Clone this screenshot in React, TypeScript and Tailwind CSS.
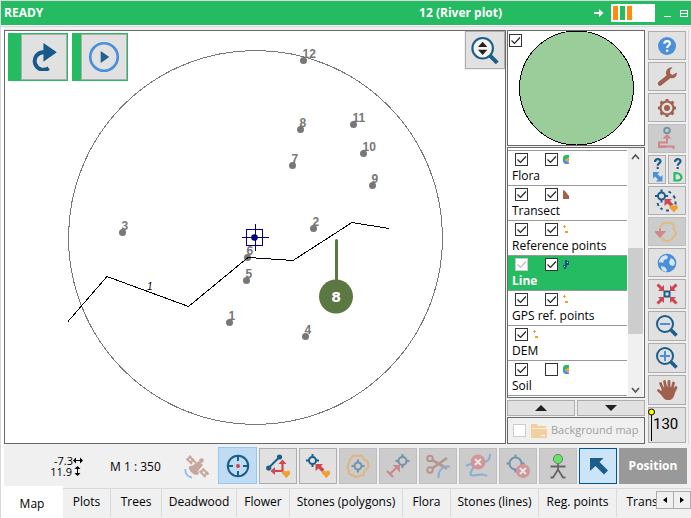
import type { ReactNode } from "react";

const NAVY = "#1b5e8c";
const BLUE = "#4a90d9";
const RED = "#cf4550";
const BROWN = "#a0604e";
const ORANGE = "#f0a030";

/* ---------- Icons ---------- */

const Icon = ({ children, className = "size-6" }: { children: ReactNode; className?: string }) => (
  <svg viewBox="0 0 24 24" className={className} fill="none" aria-hidden="true">
    {children}
  </svg>
);

// Small survey target: ring with four ticks
const Target = ({ x, y, r = 4, color = NAVY }: { x: number; y: number; r?: number; color?: string }) => (
  <g stroke={color} strokeWidth="2">
    <circle cx={x} cy={y} r={r} />
    <path d={`M${x} ${y - r - 3}v3M${x} ${y + r}v3M${x - r - 3} ${y}h3M${x + r} ${y}h3`} />
  </g>
);

const Crossed = ({ x, y, r }: { x: number; y: number; r: number }) => (
  <g>
    <circle cx={x} cy={y} r={r} fill="#d9626a" />
    <path d={`M${x - 3} ${y - 3}l6 6M${x + 3} ${y - 3}l-6 6`} stroke="#fff" strokeWidth="2" />
  </g>
);

const HelpIcon = () => (
  <Icon>
    <circle cx="12" cy="12" r="9" fill={BLUE} />
    <path d="M9.300 9.800c0-3.600 5.600-3.600 5.600-.4 0 2-2.800 2.200-2.800 4.600" stroke="#fff" strokeWidth="2.200" />
    <path d="M11 15.600h2.300v2.200H11z" fill="#fff" />
  </Icon>
);

const WrenchIcon = () => (
  <Icon>
    <path d="M5 18.500l8.500-6.800" stroke={BROWN} strokeWidth="4.500" strokeLinecap="round" />
    <path d="M17.500 2.200c-4-.3-7.200 2.800-6.400 6.800.7 3.600 4.800 5.400 8.200 3.700 1.900-1.100 2.900-3.200 2.500-5.300l-4.400 2.600-2.300-1.600.1-3.400z" fill={BROWN} />
  </Icon>
);

const GearIcon = () => (
  <Icon>
    <circle cx="12" cy="12" r="6.500" stroke={BROWN} strokeWidth="2.200" />
    <circle cx="12" cy="12" r="3" fill={BROWN} />
    <path
      d="M12 3v3M12 18v3M3 12h3M18 12h3M5.600 5.600l2 2M16.400 16.400l2 2M18.400 5.600l-2 2M7.600 16.400l-2 2"
      stroke={BROWN}
      strokeWidth="3"
    />
  </Icon>
);

const LevelIcon = () => (
  <Icon>
    <circle cx="12" cy="3.500" r="2.800" stroke={NAVY} strokeWidth="2" />
    <path d="M12 7l4.500 4.500h-9z" fill={RED} />
    <path d="M12 11v4.500H4v4h14.500V22" stroke={RED} strokeWidth="2" />
    <path d="M3 18.500h8V21H3z" fill={RED} />
  </Icon>
);

const Question = () => (
  <>
    <path d="M5 5c0-3.800 5.500-3.800 5.500-.8 0 2-2.800 2-2.800 4.600" stroke={NAVY} strokeWidth="2.200" />
    <path d="M6.600 10h2.200v2H6.600z" fill={NAVY} />
  </>
);

const HelpArrowIcon = () => (
  <svg viewBox="0 0 15 26" className="h-[26px] w-[15px]" fill="none" aria-hidden="true">
    <Question />
    <path d="M3 15h6.500l-2 2 3 3 2-2v6.500H6l2-2-3-3-2 2z" fill={BLUE} />
  </svg>
);

const HelpShapeIcon = () => (
  <svg viewBox="0 0 15 26" className="h-[26px] w-[15px]" fill="none" aria-hidden="true">
    <Question />
    <path d="M4.500 16v7.500h4c2.400-.5 3.600-2.500 2.600-4.500-.8-1.800-3-3.200-6.600-3z" stroke="#25bb62" strokeWidth="2.200" />
  </svg>
);

const Blob = ({ x, y }: { x: number; y: number }) => (
  <path d={`M${x} ${y + 4}l-3.500-3.500a2 2 0 0 1 2-3.500l1.500.5a2.200 2.200 0 1 1 2.500 3.500z`} fill={ORANGE} />
);

const SnapIcon = () => (
  <Icon>
    <Target x={6.500} y={7} r={3.500} />
    <path d="M9.500 10h7.500l-2 2 3.500 3.500-2.500 2.500-3.500-3.500-3 2.500z" fill={RED} />
    <path d="M13.500 2.500l2.500 1.500M18.500 6.500l1.500 3M20.500 12.500v3M2.500 14l1 3M5.500 19l2 1.500M11 21.500h3" stroke={NAVY} strokeWidth="2" />
    <Blob x={19} y={19.500} />
  </Icon>
);

const ImportShapeIcon = () => (
  <Icon>
    <path
      d="M6 8c-1-4 4-6 7-5 4-1 7 2 5.500 6 3 2 3.500 6 .5 7-2 4-6 6-9 4.500-2-.5-3-2-3-3.500"
      stroke="#f2a93b"
      strokeWidth="2"
    />
    <path d="M5 8.500v4M1 12h8l-4 4.500z" stroke={RED} strokeWidth="2" fill={RED} />
  </Icon>
);

const GlobeIcon = () => (
  <Icon>
    <circle cx="12" cy="12" r="9.300" fill={BLUE} />
    <path d="M8 5l3-1 2 2-1 2-3 1-1 3-2-1-2 1c0-3 1.500-5.500 4-7zM16 7l3 2 1 4-2 2-3-1-1-3zM6 15l4 1 2 3-1 2c-3-.5-5-2.500-5-6z" fill="#d6e4f3" />
  </Icon>
);

const CenterIcon = () => (
  <Icon>
    <rect x="9.500" y="9.500" width="5" height="5" stroke={NAVY} strokeWidth="2" />
    <path d="M2.500 2.500l5 5M21.500 2.500l-5 5M2.500 21.500l5-5M21.500 21.500l-5-5" stroke={RED} strokeWidth="3" />
    <path d="M9 3v6H3zM15 3v6h6zM9 21v-6H3zM15 21v-6h6z" fill={RED} />
  </Icon>
);

const ZoomIcon = ({ plus = false }: { plus?: boolean }) => (
  <Icon>
    <circle cx="10" cy="10" r="8" stroke={NAVY} strokeWidth="2" />
    <path d="M15.500 15.500l6 6" stroke={NAVY} strokeWidth="3.500" />
    <path d={plus ? "M5 10h10M10 5v10" : "M5 10h10"} stroke={BLUE} strokeWidth="2" />
  </Icon>
);

const HandIcon = () => (
  <Icon>
    <path
      d="M8.500 12L5.500 5.500M11 10.500L9.500 3.500M14 10.500V3.500M17 11.500l1.500-6.500M8 16.500L3.500 12.500M18.500 14.500l2.500-5"
      stroke={BROWN}
      strokeWidth="2.800"
      strokeLinecap="round"
    />
    <path d="M7 10.500c3-2 8-2.500 11.500 0 2 3 1.500 7-1 10-2 2-6.500 2-8.500 0-1.500-1.700-2.500-3-3.500-5z" fill={BROWN} />
  </Icon>
);

const RedoIcon = () => (
  <Icon className="size-7">
    <path d="M16 21.500a7.500 7.500 0 1 1-4-13.500h2" stroke="#175a8a" strokeWidth="3.400" />
    <path d="M11.500 0v16l11.500-8z" fill="#175a8a" />
  </Icon>
);

const PlayIcon = () => (
  <Icon className="size-8">
    <circle cx="12" cy="12" r="10.300" stroke={BLUE} strokeWidth="2" />
    <path d="M9.500 7.500v9l6.500-4.500z" fill="#235f93" />
  </Icon>
);

const ScaleIcon = () => (
  <Icon className="size-7">
    <circle cx="10" cy="10.500" r="8.800" stroke={NAVY} strokeWidth="1.800" fill="#f4f4f4" />
    <path d="M16.500 17l6 6" stroke={NAVY} strokeWidth="3.500" />
    <path d="M6 9.500h8L10 5zM6 11.700h8l-4 4.500z" fill="#222" />
  </Icon>
);

const SatelliteIcon = () => (
  <svg viewBox="0 0 26 26" className="size-[26px] opacity-50" fill="none" aria-hidden="true">
    <path d="M5 3l7 7M2.500 5.500L8 11M15.500 18l6 6M18.500 15.500l6 6M3 7l4-4M6 10l4-4M16 20l4-4M20 23l4-4" stroke={BROWN} strokeWidth="2" />
    <path d="M8 13c-2-1-4 1-3 3 2 4 5 6 8 6 2 0 2-3 1-4l5-6-4-4z" fill={BROWN} />
    <circle cx="17.500" cy="7.500" r="2.300" fill={BROWN} />
    <path d="M1.200 16c0 5 3 8 6.800 8.500" stroke={BLUE} strokeWidth="2" />
  </svg>
);

const LocateIcon = () => (
  <Icon>
    <circle cx="12" cy="12" r="10.200" stroke={NAVY} strokeWidth="2" />
    <path d="M12 1v6M12 17v6M1 12h6M17 12h6" stroke={NAVY} strokeWidth="2" />
    <circle cx="12" cy="12" r="2" fill={RED} />
  </Icon>
);

const EditLineIcon = () => (
  <Icon>
    <path d="M2.500 14L13.500 3" stroke={NAVY} strokeWidth="2" />
    <circle cx="13.500" cy="3" r="2.600" fill={NAVY} />
    <circle cx="2.700" cy="14" r="2.600" fill={NAVY} />
    <path d="M8.500 17h8V9" stroke={RED} strokeWidth="2.200" />
    <path d="M16.500 5.500l4 4.500h-8zM4.500 17L9 13v8z" fill={RED} />
    <Blob x={20.500} y={20} />
  </Icon>
);

const EditPointIcon = () => (
  <Icon>
    <Target x={6.500} y={6.500} r={3.500} />
    <path d="M9.500 10H17l-2 2 3.500 3.500L16 18l-3.500-3.500-3 2.500z" fill={RED} />
    <Blob x={20.500} y={20} />
  </Icon>
);

const PolygonTargetIcon = () => (
  <Icon>
    <path d="M7 1.500l9 .5 2 3 4 3 .5 5-4 4-1 4-8 2-6-3-2-7L4 6z" stroke={ORANGE} strokeWidth="2" />
    <Target x={12} y={12} r={3.500} />
  </Icon>
);

const MeasureIcon = () => (
  <Icon>
    <Target x={16.500} y={7} />
    <path d="M4 20l6-6M1 17l6 6" stroke={RED} strokeWidth="2.200" />
    <path d="M6.500 11H14v7.500z" fill={RED} />
  </Icon>
);

const CutIcon = () => (
  <Icon>
    <circle cx="4" cy="4.500" r="2.800" stroke={BROWN} strokeWidth="2" />
    <circle cx="4" cy="16" r="2.800" stroke={BROWN} strokeWidth="2" />
    <path d="M6 6l15 8.500M6 14.500L21 4" stroke={BROWN} strokeWidth="2.600" />
    <path d="M24 12.500c-5-1-12 2-11.500 11.500" stroke={BLUE} strokeWidth="2" />
  </Icon>
);

const DeleteLineIcon = () => (
  <svg viewBox="0 0 26 26" className="size-[26px]" fill="none" aria-hidden="true">
    <path d="M25 1c0 4-2 7-5 8M1 13c4-3 8-2 7 2-1 3-4 5-2 7 5 2 10-3 16 1" stroke={BLUE} strokeWidth="2" />
    <Crossed x={13} y={9} r={7.500} />
  </svg>
);

const DeletePointIcon = () => (
  <Icon>
    <Target x={9.500} y={9.500} r={6} />
    <Crossed x={17} y={17} r={7} />
  </Icon>
);

const PersonIcon = () => (
  <svg viewBox="0 0 24 26" className="h-[26px] w-6" fill="none" aria-hidden="true">
    <path d="M12 9v8M4.500 13.500h15M12 16.500l-5 8H4.500M12 16.500l5 8h2.500" stroke="#666" strokeWidth="1.800" />
    <circle cx="12" cy="6" r="4.600" fill="#63e566" stroke="#777" strokeWidth="1" />
  </svg>
);

const PointerIcon = () => (
  <Icon>
    <path d="M4 4h13.500l-4 4 8.500 8.500-4 4-8.500-8.500L4 17z" fill="#1b5e8c" />
  </Icon>
);

/* ---------- Controls ---------- */

type ToolProps = { label: string; children: ReactNode; size?: string; disabled?: boolean };

const ToolButton = ({ label, children, size = "h-[29px] w-full", disabled = false }: ToolProps) => (
  <button
    type="button"
    aria-label={label}
    disabled={disabled}
    className={`${size} flex shrink-0 items-center justify-center border ${
      disabled ? "border-[#bfbfbf] bg-[#cccccc]" : "border-[#adadad] bg-[#e1e1e1]"
    }`}
  >
    <span className={disabled ? "opacity-50" : ""}>{children}</span>
  </button>
);

type CheckProps = { label: string; checked?: boolean; disabled?: boolean };

const Check = ({ label, checked = true, disabled = false }: CheckProps) => (
  <span className="relative block size-[13px] shrink-0">
    <input
      type="checkbox"
      aria-label={label}
      defaultChecked={checked}
      disabled={disabled}
      className="peer block size-[13px] appearance-none border border-[#333] bg-white disabled:border-[#ccc]"
    />
    <svg
      viewBox="0 0 13 13"
      className="pointer-events-none absolute inset-0 hidden size-[13px] text-[#222] peer-checked:block peer-disabled:text-[#bbb]"
      fill="none"
      aria-hidden="true"
    >
      <path d="M2.500 6.500l3 3 5.500-6" stroke="currentColor" strokeWidth="1.200" />
    </svg>
  </span>
);

/* ---------- Layers ---------- */

const PolygonMark = () => (
  <svg viewBox="0 0 6 9" className="h-[9px] w-1.5" aria-hidden="true">
    <path d="M2 0h4v3L2 5 0 5V2z" fill="#25bb62" />
    <path d="M6 2v6L2 5z" fill="#f0a040" />
    <path d="M0 5h2l4 3v1H2L0 7z" fill={BLUE} />
  </svg>
);

const TransectMark = () => (
  <svg viewBox="0 0 6 9" className="h-[9px] w-1.5" aria-hidden="true">
    <path d="M0 0l2 1 4 5v3H0z" fill={BROWN} />
  </svg>
);

const PointsMark = () => (
  <svg viewBox="0 0 6 9" className="h-[9px] w-1.5" aria-hidden="true">
    <path d="M1 0h1v1h1v1H2v1H1V2H0V1h1zM2 6h3v2H2z" fill={ORANGE} />
  </svg>
);

const LineMark = () => (
  <svg viewBox="0 0 6 9" className="h-[9px] w-1.5" aria-hidden="true">
    <path d="M2 0h2v7H3v2H1V7H0V5h2zM4 1h2v4H4z" fill="#17507e" />
    <path d="M4 2h1v1H4zM1 6h1v1H1z" fill="#e7f1fa" />
  </svg>
);

type Layer = { name: string; mark: ReactNode; editable?: boolean; noEdit?: boolean; active?: boolean };

const layers: Layer[] = [
  { name: "Flora", mark: <PolygonMark />, editable: true },
  { name: "Transect", mark: <TransectMark />, editable: true },
  { name: "Reference points", mark: <PointsMark />, editable: true },
  { name: "Line", mark: <LineMark />, editable: true, active: true },
  { name: "GPS ref. points", mark: <PointsMark />, editable: true },
  { name: "DEM", mark: <PointsMark />, noEdit: true },
  { name: "Soil", mark: <PolygonMark /> },
];

const LayerRow = ({ layer }: { layer: Layer }) => (
  <li
    className={`h-[35px] border-t border-[#999] pt-[2px] ${
      layer.active ? "bg-[#25bb62] font-bold text-white" : "bg-white"
    }`}
  >
    <div className="flex items-center pl-[7px]">
      <Check label={`${layer.name} visible`} disabled={layer.active} />
      {!layer.noEdit && (
        <span className="pl-[17px]">
          <Check label={`${layer.name} editable`} checked={!!layer.editable} />
        </span>
      )}
      <span className="pl-[5px]">{layer.mark}</span>
    </div>
    <div className="pl-1 leading-[19px] whitespace-nowrap">{layer.name}</div>
  </li>
);

const LayerPanel = () => (
  <aside className="flex w-[138px] shrink-0 flex-col">
    <div className="relative h-[116px] shrink-0 border border-[#696969] bg-white">
      <div className="absolute top-[3px] left-[1px]">
        <Check label="Overview" />
      </div>
      <svg viewBox="0 0 136 114" className="size-full" shapeRendering="crispEdges" role="img" aria-label="Plot overview">
        <circle cx="68.500" cy="57" r="57" fill="#9bcd9b" stroke="#000" />
      </svg>
    </div>

    <div className="mt-px flex flex-1 border border-[#696969] bg-white">
      <ul className="min-w-0 flex-1 pt-[2px]">
        {layers.map((layer) => (
          <LayerRow key={layer.name} layer={layer} />
        ))}
        <li className="border-t border-[#999]" />
      </ul>
      <div className="ml-px mr-px flex w-[15px] flex-col items-center bg-[#f0f0f0]">
        <svg viewBox="0 0 15 17" className="h-[17px] w-full" fill="none" aria-hidden="true">
          <path d="M4 11l3.500-4L11 11" stroke="#555" strokeWidth="1.600" />
        </svg>
        <div className="h-[83px]" />
        <div className="h-[86px] w-full bg-[#cdcdcd]" />
        <div className="flex-1" />
        <svg viewBox="0 0 15 17" className="h-[17px] w-full" fill="none" aria-hidden="true">
          <path d="M4 8l3.500 4L11 8" stroke="#555" strokeWidth="1.600" />
        </svg>
      </div>
    </div>

    <div className="mt-[2px] grid h-4 grid-cols-2 gap-[2px]">
      <button type="button" aria-label="Layer up" className="flex items-center justify-center border border-[#adadad] bg-[#e1e1e1]">
        <svg viewBox="0 0 12 6" className="h-1.5 w-3" aria-hidden="true">
          <path d="M0 6h12L6 0z" fill="#222" />
        </svg>
      </button>
      <button type="button" aria-label="Layer down" className="flex items-center justify-center border border-[#adadad] bg-[#e1e1e1]">
        <svg viewBox="0 0 12 6" className="h-1.5 w-3" aria-hidden="true">
          <path d="M0 0h12L6 6z" fill="#222" />
        </svg>
      </button>
    </div>

    <div className="mt-px flex h-[27px] items-center border border-[#696969] pl-[5px] text-[#a0a0a0]">
      <Check label="Background map" checked={false} disabled />
      <svg viewBox="0 0 16 14" className="ml-[5px] h-[14px] w-4 shrink-0" aria-hidden="true">
        <path d="M0 0h6l1 2h8v2H2v10H0z" fill="#f3cfa0" />
        <path d="M1 5h15v9H1z" fill="#f3cfa0" />
        <path d="M1 4.500h15" stroke="#fbeedd" />
        <path d="M10 11.500h4" stroke="#fff" />
      </svg>
      <span className="ml-1 text-[11px] whitespace-nowrap">Background map</span>
    </div>
  </aside>
);

/* ---------- Map ---------- */

const points = [
  { id: "12", x: 303.5, y: 60.5 },
  { id: "8", x: 300.5, y: 129.5 },
  { id: "11", x: 353.5, y: 124.5 },
  { id: "10", x: 363.5, y: 153.5 },
  { id: "9", x: 372.5, y: 185.5 },
  { id: "7", x: 292.5, y: 165.5 },
  { id: "2", x: 313.5, y: 228.5 },
  { id: "3", x: 122.5, y: 232.5 },
  { id: "6", x: 247.5, y: 257.5 },
  { id: "5", x: 246.5, y: 280.5 },
  { id: "1", x: 229.5, y: 322.5 },
  { id: "4", x: 305.5, y: 336.5 },
];

const PlotMap = () => (
  <main className="relative min-w-0 flex-1 border border-[#696969] bg-white">
    <svg viewBox="5 31 500 412" className="block size-full" fill="none" role="img" aria-label="River plot map">
      <circle cx="255.500" cy="237.500" r="187" stroke="#777" shapeRendering="crispEdges" />
      {points.map((p) => (
        <g key={p.id} fill="#777">
          <circle cx={p.x} cy={p.y} r="3.500" />
          <text
            x={p.x - 1}
            y={p.y - 3}
            fontSize="12"
            fontWeight="bold"
            fontFamily="Liberation Sans Narrow, Liberation Sans, sans-serif"
          >
            {p.id}
          </text>
        </g>
      ))}
      <path
        d="M68 321.500L107 276.500 188.500 306.500 248 257.500 293 260.500 352 222.500 389 228.500"
        stroke="#000"
        shapeRendering="crispEdges"
      />
      <text x="147" y="290" fontSize="10" fontStyle="italic" fill="#000" fontFamily="Liberation Sans, sans-serif">
        1
      </text>
      <g stroke="#000080" shapeRendering="crispEdges">
        <rect x="246.500" y="229.500" width="16" height="16" />
        <path d="M242 237.500h27M255.500 224v27" />
      </g>
      <circle cx="254.500" cy="237.500" r="3.300" fill="#000080" />
      <path d="M336.500 240.500V282" stroke="#5b7742" strokeWidth="3" strokeLinecap="round" />
      <circle cx="336" cy="296.500" r="17" fill="#5b7742" />
      <text x="336" y="302" fontSize="14" fontWeight="bold" textAnchor="middle" fill="#fff" fontFamily="DejaVu Sans, sans-serif">
        8
      </text>
    </svg>

    <div className="absolute top-[2px] left-[3px] flex gap-1">
      <div className="bg-[#25bb62] py-px pr-px pl-[13px]">
        <ToolButton label="Redo" size="size-[46px]">
          <RedoIcon />
        </ToolButton>
      </div>
      <div className="bg-[#25bb62] py-px pr-px pl-[9px]">
        <ToolButton label="Play" size="size-[46px]">
          <PlayIcon />
        </ToolButton>
      </div>
    </div>
    <div className="absolute top-0 right-0 bg-[#f0f0f0] pb-px pl-px">
      <ToolButton label="Zoom scale" size="h-[38px] w-10">
        <ScaleIcon />
      </ToolButton>
    </div>
  </main>
);

const SideBar = () => (
  <nav className="flex w-[38px] shrink-0 flex-col gap-[2px] pt-px">
    <ToolButton label="Help"><HelpIcon /></ToolButton>
    <ToolButton label="Tools"><WrenchIcon /></ToolButton>
    <ToolButton label="Settings"><GearIcon /></ToolButton>
    <ToolButton label="Level" disabled><LevelIcon /></ToolButton>
    <div className="flex justify-between">
      <ToolButton label="Find position" size="h-[29px] w-[18px]"><HelpArrowIcon /></ToolButton>
      <ToolButton label="Find shape" size="h-[29px] w-[18px]"><HelpShapeIcon /></ToolButton>
    </div>
    <ToolButton label="Snap"><SnapIcon /></ToolButton>
    <ToolButton label="Import shape" disabled><ImportShapeIcon /></ToolButton>
    <ToolButton label="Globe"><GlobeIcon /></ToolButton>
    <ToolButton label="Center" size="h-[30px] w-full"><CenterIcon /></ToolButton>
    <ToolButton label="Zoom out" size="h-[30px] w-full"><ZoomIcon /></ToolButton>
    <ToolButton label="Zoom in" size="h-[30px] w-full"><ZoomIcon plus /></ToolButton>
    <ToolButton label="Pan" size="h-[30px] w-full"><HandIcon /></ToolButton>
    <button type="button" className="relative h-9 w-full border border-[#adadad] bg-[#e1e1e1]">
      <svg viewBox="0 0 8 34" className="absolute top-0 -left-px h-[34px] w-2" aria-hidden="true">
        <path d="M3.500 4v29" stroke="#000" />
        <circle cx="3.500" cy="4" r="3" fill="#ff0" stroke="#000" />
      </svg>
      <span className="flex pl-1 font-['Roboto',sans-serif] text-[15px]">130</span>
    </button>
  </nav>
);

const Toolbar = () => (
  <div className="ml-[3px] flex h-[42px] shrink-0 items-center bg-[#f0f0f0] pr-1">
    <div className="ml-[46px] w-[33px] pt-px text-right text-[11px] leading-[11px]">
      <div className="flex items-center justify-end">
        -7.3
        <svg viewBox="0 0 10 7" className="h-[7px] w-2.5" aria-hidden="true">
          <path d="M0 3.500L3 .5V3h4V.5l3 3-3 3V4H3v2.500z" fill="#000" />
        </svg>
      </div>
      <div className="flex items-center justify-end pr-[2px]">
        11.9
        <svg viewBox="0 0 7 10" className="ml-[2px] h-2.5 w-[7px]" aria-hidden="true">
          <path d="M3.500 0l3 3H4v4h2.500l-3 3-3-3H3V3H.5z" fill="#000" />
        </svg>
      </div>
    </div>
    <div className="ml-[27px] pt-1 whitespace-nowrap">M 1 : 350</div>
    <div className="ml-auto flex items-center gap-[2px] pt-px">
      <span className="mr-1.5"><SatelliteIcon /></span>
      <button
        type="button"
        aria-label="Locate"
        className="flex h-[37px] w-[39px] items-center justify-center border border-[#90c8f6] bg-[#bfdcf3]"
      >
        <LocateIcon />
      </button>
      <ToolButton label="Edit line" size="h-9 w-[38px]"><EditLineIcon /></ToolButton>
      <ToolButton label="Edit point" size="h-9 w-[38px]"><EditPointIcon /></ToolButton>
      <ToolButton label="Polygon point" size="h-9 w-[38px]" disabled><PolygonTargetIcon /></ToolButton>
      <ToolButton label="Measure point" size="h-9 w-[38px]" disabled><MeasureIcon /></ToolButton>
      <ToolButton label="Cut line" size="h-9 w-[38px]" disabled><CutIcon /></ToolButton>
      <ToolButton label="Delete line" size="h-9 w-[38px]" disabled><DeleteLineIcon /></ToolButton>
      <ToolButton label="Delete point" size="h-9 w-[38px]" disabled><DeletePointIcon /></ToolButton>
      <button
        type="button"
        aria-label="Person"
        className="flex h-9 w-[38px] items-center justify-center border border-[#bfbfbf] bg-[#cccccc]"
      >
        <PersonIcon />
      </button>
      <button
        type="button"
        aria-label="Select"
        className="flex h-9 w-[38px] items-center justify-center border border-[#00549a] bg-[#cce4f7]"
      >
        <PointerIcon />
      </button>
      <button type="button" className="h-9 w-[68px] bg-[#999] text-xs font-bold text-white">
        Position
      </button>
    </div>
  </div>
);

/* ---------- Tabs ---------- */

const tabs = [
  { name: "Plots", width: "w-12" },
  { name: "Trees", width: "w-[51px]" },
  { name: "Deadwood", width: "w-[75px]" },
  { name: "Flower", width: "w-[53px]" },
  { name: "Stones (polygons)", width: "w-[113px]" },
  { name: "Flora", width: "w-12" },
  { name: "Stones (lines)", width: "w-[88px]" },
  { name: "Reg. points", width: "w-[78px]" },
  { name: "Transect", width: "w-[68px]" },
];

const TabBar = () => (
  <div className="flex h-8 shrink-0">
    <div role="tablist" className="flex min-w-0 flex-1 overflow-hidden">
      <button type="button" role="tab" aria-selected="true" className="w-[62px] shrink-0 bg-white pt-1">
        Map
      </button>
      {tabs.map((tab) => (
        <button
          key={tab.name}
          type="button"
          role="tab"
          aria-selected="false"
          className={`${tab.width} mt-[2px] mb-px shrink-0 border-t border-r border-[#d9d9d9] pb-[2px] whitespace-nowrap`}
        >
          {tab.name}
        </button>
      ))}
    </div>
    <div className="mt-[2px] flex h-[21px] shrink-0 items-end border-t border-[#d9d9d9]">
      <button type="button" aria-label="Previous tabs" className="flex h-[18px] w-[18px] items-center justify-center border border-[#adadad]">
        <svg viewBox="0 0 4 6" className="h-1.5 w-1" aria-hidden="true"><path d="M4 0v6L0 3z" /></svg>
      </button>
      <button type="button" aria-label="Next tabs" className="-ml-px flex h-[18px] w-[18px] items-center justify-center border border-[#adadad]">
        <svg viewBox="0 0 4 6" className="h-1.5 w-1" aria-hidden="true"><path d="M0 0v6l4-3z" /></svg>
      </button>
    </div>
  </div>
);

const TitleBar = () => (
  <header className="flex h-6 shrink-0 items-center bg-[#25bb62] pl-[3px] font-bold text-white">
    <span>READY</span>
    <span className="ml-auto">12 (River plot)</span>
    <svg viewBox="0 0 10 8" className="ml-[92px] h-2 w-2.5" aria-hidden="true">
      <path d="M0 3h5V0l4.500 4L5 8V5H0z" fill="#fff" />
    </svg>
    <div className="ml-[7px] flex h-[18px] w-11 gap-[2px] bg-white p-[2px]">
      <span className="w-[5px] bg-[#ff8c0f]" />
      <span className="w-[5px] bg-[#25bb62]" />
      <span className="w-[5px] bg-[#ff8c0f]" />
    </div>
    <button type="button" aria-label="Minimize" className="ml-[9px] flex h-2 w-[7px] items-end">
      <span className="h-px w-full bg-white" />
    </button>
    <button type="button" aria-label="Maximize" className="mr-[3px] ml-[9px] h-[7px] w-2 border border-white">
      <span className="mt-px block h-px bg-white" />
    </button>
  </header>
);

const App = () => {
  return (
    <div className="flex min-h-screen flex-col border-t border-l border-[#d9d9d9] bg-[#f0f0f0] font-['Open_Sans','Noto_Sans',sans-serif] text-xs text-black">
      <TitleBar />
      <div className="flex flex-1 flex-col bg-white">
        <div className="mt-px flex flex-1 border-t border-[#d9d9d9] bg-white pl-[3px]">
          <div className="flex min-w-0 flex-1 bg-[#f0f0f0] pt-[3px] pr-[2px]">
            <div className="flex min-w-0 flex-1 gap-[3px] border-r border-[#d9d9d9] pr-[2px]">
              <div className="flex min-w-0 flex-1 gap-px">
                <PlotMap />
                <LayerPanel />
              </div>
              <SideBar />
            </div>
          </div>
        </div>
        <Toolbar />
      </div>
      <TabBar />
    </div>
  );
};

export default App;
